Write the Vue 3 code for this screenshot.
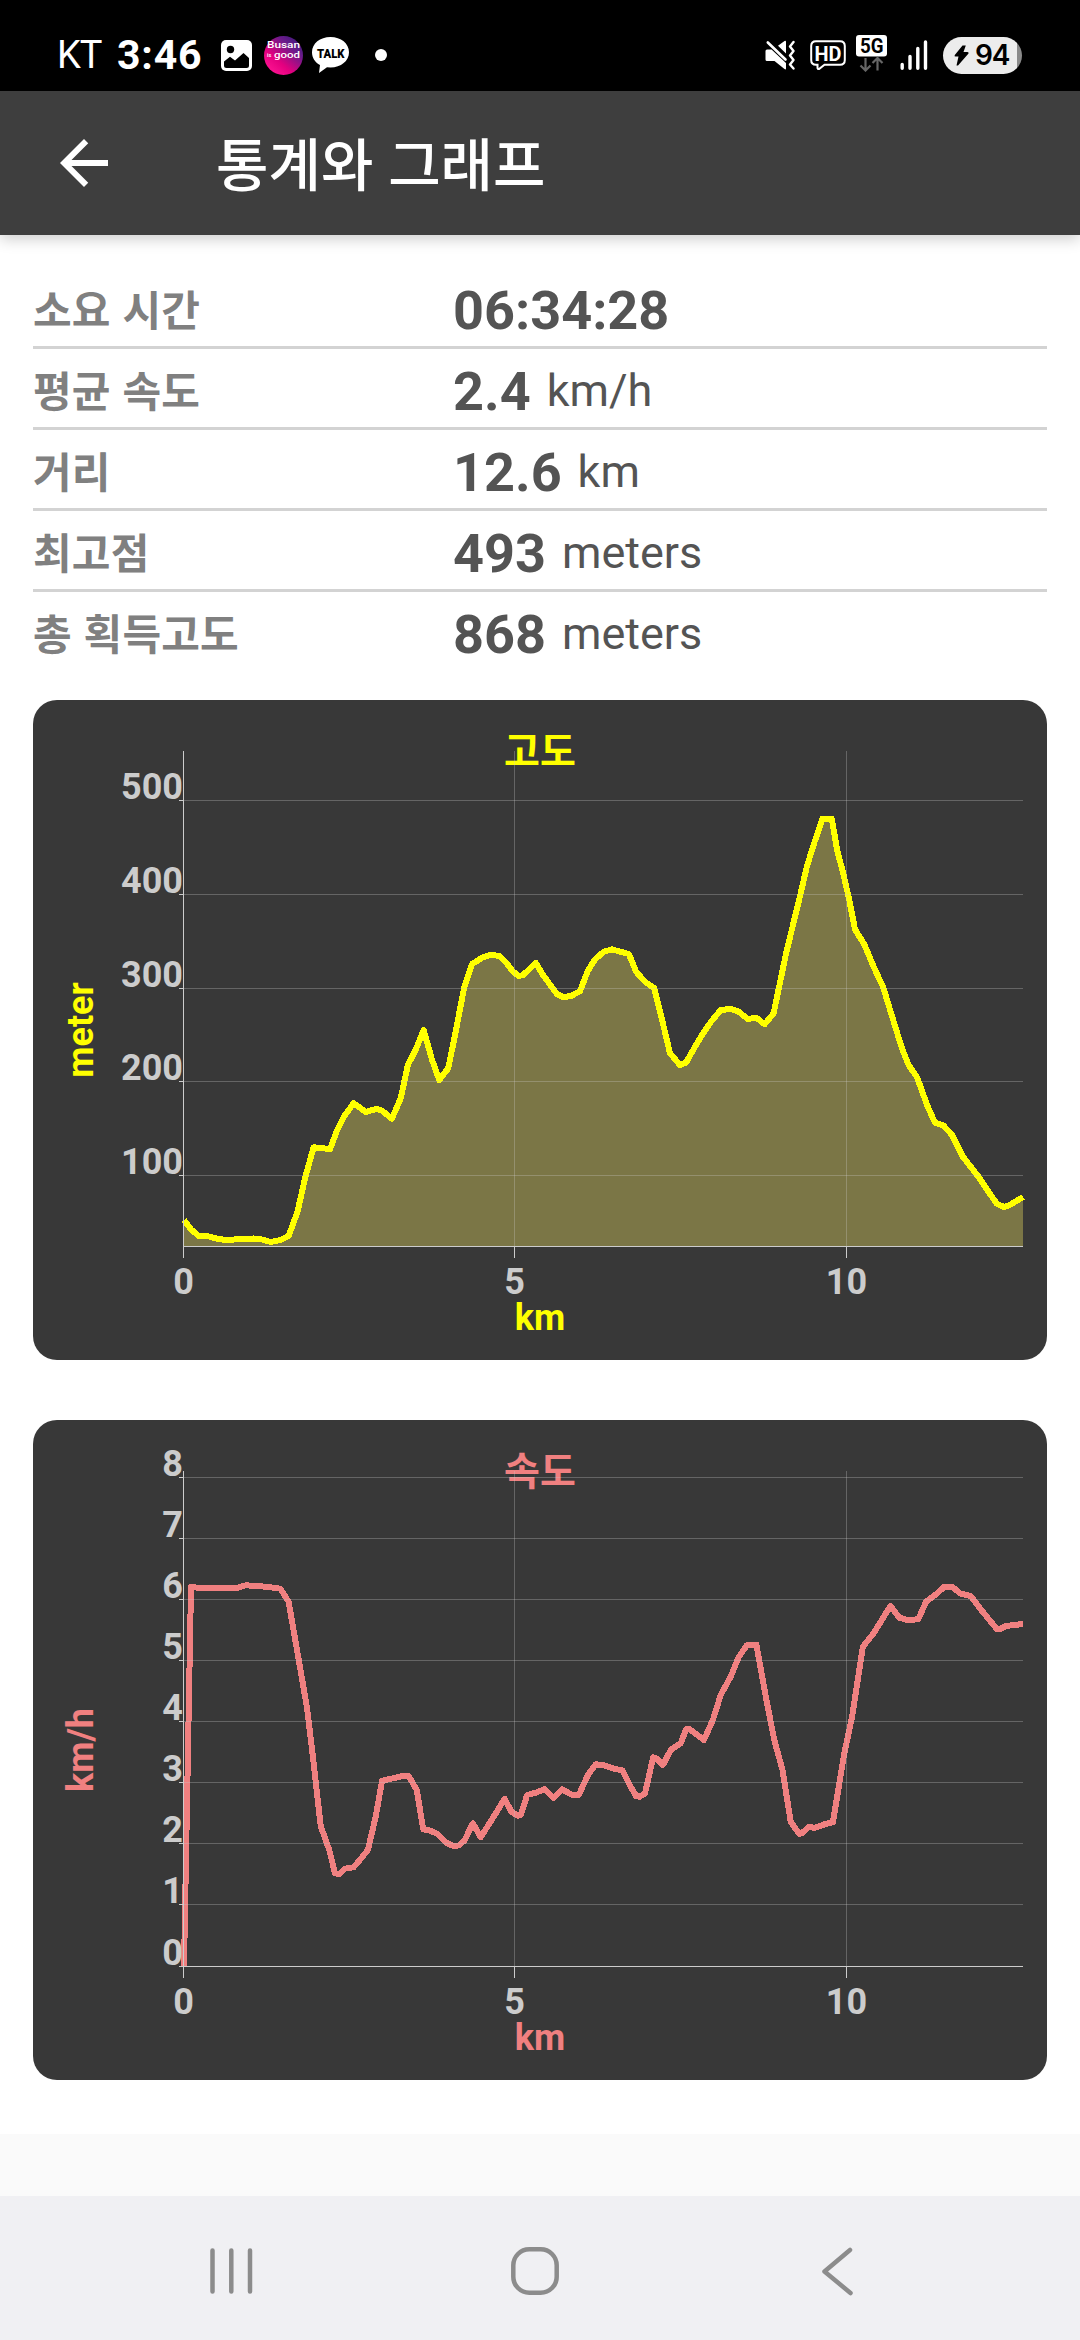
<script setup>
import { ref } from "vue";

const stats = ref([
  { label: "소요 시간", value: "06:34:28", unit: "" },
  { label: "평균 속도", value: "2.4", unit: "km/h" },
  { label: "거리", value: "12.6", unit: "km" },
  { label: "최고점", value: "493", unit: "meters" },
  { label: "총 획득고도", value: "868", unit: "meters" },
]);

// Plot area inside a 1014x660 card
const left = 150.5;
const right = 990;
const bottom = 546.5;

const xTicks = [
  { x: 150.5, label: "0" },
  { x: 481.5, label: "5" },
  { x: 813.5, label: "10" },
];

const charts = ref([
  {
    title: "고도",
    unit: "meter",
    color: "#ffff00",
    area: true,
    yTicks: [
      { y: 100.5, label: "500" },
      { y: 194.5, label: "400" },
      { y: 288.5, label: "300" },
      { y: 381.5, label: "200" },
      { y: 475.5, label: "100" },
    ],
    points:
      "151,520 158,529.5 166,536 176,536.5 185,539 194,540 204.5,539.3 220.5,538.5 229.5,539.6 237.7,542 247.4,540 255.6,536 264.5,511.7 272.4,476.7 280.6,447.3 289,448 297,449.3 304.5,429.3 311.6,415.7 320.6,403.3 333,412 343.8,408.7 349.1,410.7 358.8,418.7 367.7,398.3 374.9,365 383,349 390.6,330 399.1,360 406.3,380 415.2,368.3 422.4,333.3 431.3,286.7 439.1,264 449.1,257.7 458,254.7 466.3,256 472.4,261.7 479.5,271 485.6,276 490.2,275 502.7,262.7 509.9,275 524.1,294 530.6,297.3 538.8,295.7 547,291 554.9,270.7 562,259.3 570.9,251.7 579.1,249.3 587,251.7 595.9,254 603.1,271.7 612,281.7 621.3,288.3 629.9,323.3 637,353.3 647,365 653,362.7 662,346.7 669.1,335 678,321.7 687.7,310 697.7,309 705.6,311.7 714.9,319 723.4,317.7 731.6,324.3 740.6,313.3 753.1,253.3 768,192 773.8,166.7 781.6,141.7 789.5,118.7 798.8,118.7 804.1,150 810.2,173.3 816.3,200 822,229.3 831.6,245 840.6,266.7 850.2,287.3 860.2,320 868.4,346.7 875.6,365 884.1,377.3 894.1,405 902,422.7 910.2,425.3 919.1,435 929.9,456.7 945.9,477.3 956.6,493.3 963.8,503.7 970.9,507 976.3,505.3 990,497",
  },
  {
    title: "속도",
    unit: "km/h",
    color: "#f08080",
    area: false,
    yTicks: [
      { y: 57.5, label: "8" },
      { y: 118.5, label: "7" },
      { y: 179.5, label: "6" },
      { y: 240.5, label: "5" },
      { y: 301.5, label: "4" },
      { y: 362.5, label: "3" },
      { y: 423.5, label: "2" },
      { y: 484.5, label: "1" },
      { y: 546.5, label: "0" },
    ],
    points:
      "151,546 158,167 170.6,168.3 202.7,168.3 212.7,165.3 233,166.7 247.4,168.7 255.6,181.7 265.2,236.7 274.1,288.3 279.5,333.3 287.7,406 296.3,430 302,453.3 306.3,454 311.6,448.7 320.6,447.3 325.9,441 334.9,430 342.7,396.7 349.1,360.7 359.9,358.3 370.6,355.7 375.9,356.3 383.8,370 390.2,409.3 397.4,410.7 404.5,414 414.1,423.3 421.3,426.3 425.9,425.3 431.3,420.7 439.9,403.3 447.7,417.3 463.4,392.3 471.6,378.7 478.4,391.7 484.9,395.7 488,394.5 494.1,375 502.7,372.7 511.6,369.3 520.6,377.7 529.1,369.3 538.8,374.7 545.9,374.7 554.9,355 562.7,344.3 570.9,345.3 580.6,348.7 589.5,350.3 597.7,366.7 603.1,376 606.6,376.7 612,373.3 620.2,337.3 624,339 629.9,345 637.7,330 647.7,323.3 653.1,309.3 656.6,309.3 670.9,320 679.9,300 687.7,275 697.7,256.7 705.6,237.3 713.8,225.3 723.4,224.7 733.4,280 741.3,320 749.5,350 757.7,401.7 766.3,414 769,413 776.3,406.7 781.6,408 792.4,404 799.9,402.3 811.3,333.3 819.1,296.7 829.9,226.7 840.6,213.3 857.4,186 866.3,197.7 874.5,200 885.2,199.3 893.1,181.7 903.1,174.3 911.3,166.7 919.1,166.7 927,173.3 937.7,176 947.7,189.3 963.8,209 967.4,209 972.7,206 990,204",
  },
]);
</script>

<template>
  <div class="screen">
    <div class="status-bar">
      <div class="status-left">
        <span class="carrier">KT</span>
        <span class="clock">3:46</span>
        <svg class="picture" width="31" height="31" viewBox="0 0 31 31">
          <rect width="31" height="31" rx="5" fill="#fff" />
          <circle cx="9.5" cy="9.5" r="3.7" fill="#000" />
          <path d="M3 21.5 L9 16.8 L14 20.5 L22.5 13 L28 18 V25.5 Q28 28 25.5 28 H5.5 Q3 28 3 25.5 Z" fill="#000" />
        </svg>
        <svg class="busan" width="39" height="39" viewBox="0 0 39 39">
          <defs>
            <linearGradient id="busan" x1="0.1" y1="0.9" x2="0.8" y2="0.1">
              <stop offset="0" stop-color="#ff1493" />
              <stop offset="0.35" stop-color="#e4007f" />
              <stop offset="0.8" stop-color="#6a1b8a" />
              <stop offset="1" stop-color="#4b1a80" />
            </linearGradient>
          </defs>
          <circle cx="19.5" cy="19.5" r="19.5" fill="url(#busan)" />
          <g class="logo-text" fill="#fff">
            <text x="3" y="12" font-size="9.5" textLength="33" lengthAdjust="spacingAndGlyphs">Busan</text>
            <text x="3" y="20.5" font-size="5.5">is</text>
            <text x="10" y="21.5" font-size="9.5" textLength="26" lengthAdjust="spacingAndGlyphs">good</text>
          </g>
        </svg>
        <svg class="talk" width="37" height="36" viewBox="0 0 37 36">
          <path d="M18.5 0 C29 0 37 6.5 37 15.3 C37 24 29 30.5 18.5 30.5 L15 30.3 L7 36 L8 28 C3 25.5 0 21 0 15.3 C0 6.5 8 0 18.5 0 Z" fill="#fff" />
          <text x="5" y="20.5" class="talk-text" textLength="27.5" lengthAdjust="spacingAndGlyphs">TALK</text>
        </svg>
        <span class="dot"></span>
      </div>
      <div class="status-right">
        <svg class="mute" width="30" height="30" viewBox="0 0 30 30">
          <path d="M0.5 11 Q0.5 9.5 2 9.5 H6.5 L21 23 V28.5 Q21 30 19.5 29 L9.5 21 H2 Q0.5 21 0.5 19.5 Z M13 5.8 L19.5 1 Q21 0 21 2 V13.5 Z" fill="#fff" />
          <path d="M2.8 2.5 L20.5 19.5" stroke="#fff" stroke-width="2.6" stroke-linecap="round" />
          <path d="M28.5 2 L25 6.5 L28.5 11 L25 15.5 L28.5 20 L25 24.5 L28.5 28.5" fill="none" stroke="#fff" stroke-width="2.4" stroke-linecap="round" stroke-linejoin="round" />
        </svg>
        <svg class="hd" width="36" height="31" viewBox="0 0 36 31">
          <path d="M6 1.2 H30 Q34.8 1.2 34.8 6 V20 Q34.8 24.8 30 24.8 H14.5 L9 29 Q7.5 29.5 7.5 27.5 V24.8 H6 Q1.2 24.8 1.2 20 V6 Q1.2 1.2 6 1.2 Z" fill="none" stroke="#fff" stroke-width="2" />
          <text x="4.5" y="20.5" class="hd-text" textLength="27" lengthAdjust="spacingAndGlyphs">HD</text>
        </svg>
        <svg class="network" width="31" height="37" viewBox="0 0 31 37">
          <rect width="31" height="21.5" rx="3" fill="#fff" />
          <text x="4" y="18" class="network-text" textLength="23.5" lengthAdjust="spacingAndGlyphs">5G</text>
          <path d="M9.5 23 V35 M4.5 30.5 L9.5 35.5 L14.5 30.5 M21.5 35.5 V24 M16.5 28 L21.5 23 L26.5 28" fill="none" stroke="#666" stroke-width="2.2" />
        </svg>
        <svg class="signal" width="28" height="30" viewBox="0 0 28 30">
          <path d="M2.2 24.5 V28.2 M10 16.5 V28.2 M17.8 8.5 V28.2 M25.5 2 V28.2" stroke="#fff" stroke-width="3.4" stroke-linecap="round" />
        </svg>
        <div class="battery">
          <svg width="15" height="21" viewBox="0 0 15 21">
            <path d="M8.5 0.5 L0.8 10 Q0 11.5 1.5 11.5 H4.5 L2.5 20.5 L4 20.5 L14.5 8.5 Q15 7 13.5 7 H9.5 L11.8 0.5 Z" fill="#000" />
          </svg>
          <span>94</span>
        </div>
      </div>
    </div>

    <header class="toolbar">
      <svg width="72" height="72" viewBox="0 0 24 24">
        <path d="M20 11H7.83l5.59-5.59L12 4l-8 8 8 8 1.41-1.41L7.83 13H20v-2z" fill="#fff" />
      </svg>
      <h1>통계와 그래프</h1>
    </header>

    <main class="content">
      <ul class="stats">
        <li v-for="item in stats" :key="item.label">
          <span class="label">{{ item.label }}</span>
          <b class="value">{{ item.value }}</b>
          <span v-if="item.unit" class="unit">{{ item.unit }}</span>
        </li>
      </ul>

      <svg v-for="chart in charts" :key="chart.title" class="chart" width="1014" height="660" viewBox="0 0 1014 660">
        <!-- Series -->
        <g class="series">
          <polygon v-if="chart.area" class="area" :points="`${left},${bottom} ${chart.points} ${right},${bottom}`" />
          <polyline class="line" :points="chart.points" :stroke="chart.color" />
        </g>

        <!-- Title and axis names -->
        <text class="title" x="507" y="65" :fill="chart.color">{{ chart.title }}</text>
        <text class="name" x="507" y="630" :fill="chart.color">km</text>
        <text class="name" transform="translate(60 330) rotate(-90)" :fill="chart.color">{{ chart.unit }}</text>

        <!-- Grid -->
        <g class="grid">
          <line v-for="tick in chart.yTicks" :key="tick.label" :x1="left" :y1="tick.y" :x2="right" :y2="tick.y" />
          <line v-for="tick in xTicks" :key="tick.label" :x1="tick.x" y1="51" :x2="tick.x" :y2="bottom" />
        </g>

        <!-- Axes -->
        <g class="axis">
          <line :x1="left" y1="51" :x2="left" :y2="bottom" />
          <line :x1="left" :y1="bottom" :x2="right" :y2="bottom" />
          <line v-for="tick in chart.yTicks" :key="tick.label" x1="146" :y1="tick.y" x2="151" :y2="tick.y" />
          <line v-for="tick in xTicks" :key="tick.label" :x1="tick.x" y1="547" :x2="tick.x" y2="558" />
        </g>
        <text v-for="tick in chart.yTicks" :key="tick.label" class="y-label" x="150" :y="tick.y - 2">{{ tick.label }}</text>
        <text v-for="tick in xTicks" :key="tick.label" class="x-label" :x="tick.x" y="593.5">{{ tick.label }}</text>
      </svg>
    </main>

    <nav class="nav-bar">
      <svg width="44" height="50" viewBox="0 0 44 50">
        <path d="M3.5 4.5 V45.5 M22.3 4.5 V45.5 M41 4.5 V45.5" />
      </svg>
      <svg class="home" width="50" height="50" viewBox="0 0 50 50">
        <rect x="3.3" y="3.3" width="43.4" height="43.4" rx="16" />
      </svg>
      <svg width="32" height="50" viewBox="0 0 32 50">
        <path d="M29 4 L3.5 25.5 L29.5 47" />
      </svg>
    </nav>
  </div>
</template>

<style>
body {
  margin: 0;
  background: #fafafa;
}
</style>

<style scoped>
.screen {
  width: 1080px;
  height: 2340px;
  display: flex;
  flex-direction: column;
  overflow: hidden;
  background: #fafafa;
  font-family: Roboto, "Noto Sans CJK KR", sans-serif;
}

.status-bar {
  height: 91px;
  flex: none;
  box-sizing: border-box;
  padding: 19px 58px 0 57px;
  display: flex;
  justify-content: space-between;
  background: #000;
  color: #fff;
}

.status-left,
.status-right {
  height: 72px;
  display: flex;
  align-items: center;
}

.carrier {
  width: 60px;
  font-size: 38px;
  font-weight: 400;
  letter-spacing: -1px;
}

.clock {
  width: 83px;
  font-size: 41px;
  font-weight: 700;
  letter-spacing: 0.8px;
  white-space: nowrap;
}

.picture { margin-left: 21px; }
.busan { margin-left: 12px; }
.talk { margin-left: 9px; }
.mute { margin-right: 15px; }
.hd { margin-right: 10px; }
.network { margin-right: 13px; margin-top: -3px; }
.signal { margin-right: 15px; }

.logo-text {
  font-family: Roboto, sans-serif;
  font-weight: 500;
}

.talk-text {
  font-size: 13.5px;
  font-weight: 900;
}

.hd-text {
  font-size: 21px;
  font-weight: 700;
  fill: #fff;
}

.network-text {
  font-size: 20.5px;
  font-weight: 700;
}

.dot {
  width: 12px;
  height: 12px;
  margin-left: 26px;
  border-radius: 50%;
  background: #fff;
}

.battery {
  width: 79px;
  height: 37px;
  box-sizing: border-box;
  padding-left: 11px;
  display: flex;
  align-items: center;
  gap: 6px;
  border-radius: 19px;
  background: linear-gradient(to right, #ececec 74px, #8a8a8a 74px);
  color: #000;
  font-family: Inter, sans-serif;
  font-size: 28px;
  font-weight: 600;
  letter-spacing: -1.2px;
}

.toolbar {
  height: 144px;
  flex: none;
  position: relative;
  box-sizing: border-box;
  padding-left: 48px;
  display: flex;
  align-items: center;
  background: #3e3e3e;
  box-shadow: 0 4px 14px rgba(0, 0, 0, 0.2);
}

h1 {
  margin: 0 0 5px 96px;
  color: #fff;
  font-family: "Noto Sans CJK KR", sans-serif;
  font-size: 57px;
  font-weight: 500;
  line-height: 72px;
  word-spacing: 2px;
}

.content {
  height: 1899px;
  flex: none;
  box-sizing: border-box;
  padding: 33px 33px 0;
  background: #fff;
}

.stats {
  height: 432px;
  margin: 0;
  padding: 0;
  list-style: none;
}

.stats li {
  height: 78px;
  display: flex;
  border-bottom: 3px solid #d3d3d3;
}

.stats li:last-child {
  border-bottom: none;
}

.label {
  width: 420px;
  color: #808080;
  font-family: "Noto Sans CJK KR", sans-serif;
  font-size: 42px;
  font-weight: 700;
  line-height: 79px;
  letter-spacing: 0.2px;
  word-spacing: 2px;
}

.value,
.unit {
  color: #545454;
  white-space: nowrap;
}

.value {
  font-size: 54px;
  line-height: 86px;
}

.unit {
  margin-left: 16px;
  font-size: 45px;
  line-height: 84px;
}

.chart {
  display: block;
  margin-bottom: 60px;
  border-radius: 24px;
  background: #383838;
}

.series,
.grid,
.axis {
  shape-rendering: crispEdges;
}

.area {
  fill: #7b7646;
}

.line {
  fill: none;
  stroke-width: 6;
  stroke-linejoin: round;
}

.grid line {
  stroke: rgba(204, 204, 204, 0.3);
}

.axis line {
  stroke: #ccc;
}

.title {
  font-family: "Noto Sans CJK KR", sans-serif;
  font-size: 39px;
  font-weight: 700;
  text-anchor: middle;
}

.name,
.x-label,
.y-label {
  font-size: 36px;
  font-weight: 700;
  text-anchor: middle;
}

.x-label,
.y-label {
  fill: #ccc;
}

.y-label {
  text-anchor: end;
}

.nav-bar {
  height: 144px;
  flex: none;
  margin-top: 62px;
  box-sizing: border-box;
  padding: 5px 227px 0 209px;
  display: flex;
  align-items: center;
  justify-content: space-between;
  background: #f0f0f3;
}

.nav-bar svg {
  fill: none;
  stroke: #8c8c8c;
  stroke-width: 4.5;
  stroke-linecap: round;
  stroke-linejoin: round;
}

.nav-bar .home {
  margin-right: 5px;
}
</style>
